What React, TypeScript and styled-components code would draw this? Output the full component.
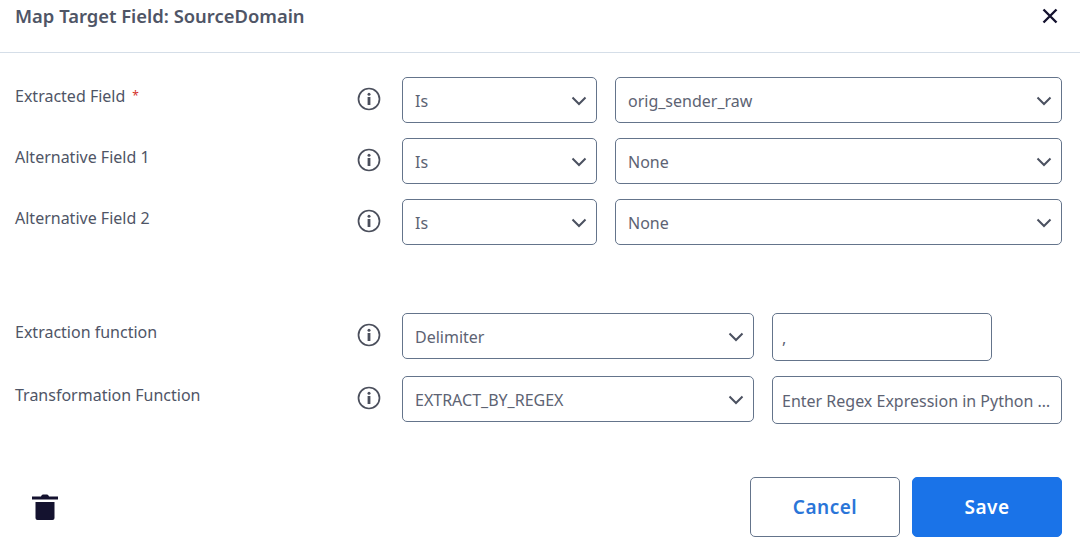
import React from 'react'
import styled, { createGlobalStyle } from 'styled-components'

const GlobalStyle = createGlobalStyle`
html, body {
  margin: 0;
  background: #fff;
  font-family: "Noto Sans", "Open Sans", sans-serif;
}
`

const Dialog = styled('div')`
  width: 1080px;
  height: 538px;
  overflow: hidden;
  display: flex;
  flex-direction: column;
`

const Header = styled('header')`
  height: 52px;
  flex: none;
  border-bottom: 1px solid #d5dee8;
  display: flex;
  align-items: flex-start;
  justify-content: space-between;
  padding: 0 18px 0 15px;
`

const Title = styled('h2')`
  margin: 4px 0 0;
  font-size: 18.4px;
  line-height: 24px;
  font-weight: 600;
  color: #4f5566;
`

const CloseButton = styled('button')`
  border: 0;
  background: none;
  padding: 0;
  margin-top: 7px;
  width: 24px;
  height: 18px;
  display: flex;
  align-items: center;
  justify-content: center;
`

const Form = styled('div')`
  flex: 1;
  padding: 24px 18px 0 15px;
  display: flex;
  flex-direction: column;
`

const Group = styled('div')<{ $mb: number }>`
  display: flex;
  flex-direction: column;
  gap: 15px;
  margin-bottom: ${p => p.$mb}px;
`

const Row = styled('div')`
  display: flex;
  align-items: flex-start;
`

const Label = styled('label')`
  width: 342px;
  flex: none;
  padding-top: 9px;
  font-size: 16px;
  line-height: 20px;
  color: #4f5566;
`

const Required = styled('span')`
  color: #d4342c;
  font-size: 12px;
  margin-left: 7px;
  vertical-align: 2px;
`

const InfoSlot = styled('div')`
  width: 45px;
  flex: none;
  padding-top: 10px;
  height: 24px;
`

const Controls = styled('div')`
  display: flex;
  gap: 18px;
`

const SelectBox = styled('div')<{ $w: number }>`
  width: ${p => p.$w}px;
  height: 46px;
  box-sizing: border-box;
  border: 1px solid #64748b;
  border-radius: 5px;
  padding: 2px 9px 0 12px;
  display: flex;
  align-items: center;
  justify-content: space-between;
  font-size: 16px;
  color: #5d6373;
`

const TextBox = styled('div')<{ $w: number }>`
  width: ${p => p.$w}px;
  height: 48px;
  box-sizing: border-box;
  border: 1px solid #64748b;
  border-radius: 5px;
  padding: 1px 9px 0;
  display: flex;
  align-items: center;
  font-size: 16px;
  color: #5d6373;
  white-space: nowrap;
  overflow: hidden;
`

const Footer = styled('div')`
  padding: 0 18px 0 32px;
  display: flex;
  align-items: center;
  justify-content: space-between;
  height: 60px;
  margin-bottom: 1px;
`

const Actions = styled('div')`
  display: flex;
  gap: 12px;
`

const Button = styled('button')<{ $primary?: boolean }>`
  width: 150px;
  height: 60px;
  box-sizing: border-box;
  border-radius: 5px;
  border: 1px solid ${p => (p.$primary ? '#1a73e8' : '#64748b')};
  background: ${p => (p.$primary ? '#1a73e8' : '#fff')};
  color: ${p => (p.$primary ? '#fff' : '#2a75d8')};
  font-family: inherit;
  font-size: 19px;
  font-weight: 600;
  letter-spacing: 0.5px;
`

const Chevron = () => (
  <svg width="16" height="10" viewBox="0 0 16 10" fill="none">
    <path d="M1.5 1.5 8 8l6.5-6.5" stroke="#4b5160" strokeWidth="2" />
  </svg>
)

const Info = () => (
  <svg width="24" height="24" viewBox="0 0 24 24" fill="none">
    <circle cx="12" cy="12" r="10.5" stroke="#4b4f5c" strokeWidth="1.7" />
    <circle cx="12" cy="7.2" r="1.5" fill="#4b4f5c" />
    <rect x="10.6" y="10" width="2.8" height="8" fill="#4b4f5c" />
  </svg>
)

const Select = ({ value, w }: { value: string; w: number }) => (
  <SelectBox $w={w}>
    {value}
    <Chevron />
  </SelectBox>
)

const Field = ({ label, required, children }: { label: string; required?: boolean; children: React.ReactNode }) => (
  <Row>
    <Label>
      {label}
      {required && <Required>*</Required>}
    </Label>
    <InfoSlot>
      <Info />
    </InfoSlot>
    <Controls>{children}</Controls>
  </Row>
)

const App = () => {
  return (
    <Dialog>
      <GlobalStyle />
      <Header>
        <Title>Map Target Field: SourceDomain</Title>
        <CloseButton>
          <svg width="16" height="16" viewBox="0 0 16 16" fill="none">
            <path d="M1.5 1.5l13 13M14.5 1.5l-13 13" stroke="#14122f" strokeWidth="2.4" />
          </svg>
        </CloseButton>
      </Header>
      <Form>
        <Group $mb={68}>
          <Field label="Extracted Field" required>
            <Select value="Is" w={195} />
            <Select value="orig_sender_raw" w={447} />
          </Field>
          <Field label="Alternative Field 1">
            <Select value="Is" w={195} />
            <Select value="None" w={447} />
          </Field>
          <Field label="Alternative Field 2">
            <Select value="Is" w={195} />
            <Select value="None" w={447} />
          </Field>
        </Group>
        <Group $mb={0}>
          <Field label="Extraction function">
            <Select value="Delimiter" w={352} />
            <TextBox $w={220}>,</TextBox>
          </Field>
          <Field label="Transformation Function">
            <Select value="EXTRACT_BY_REGEX" w={352} />
            <TextBox $w={290}>Enter Regex Expression in Python …</TextBox>
          </Field>
        </Group>
      </Form>
      <Footer>
        <svg width="26" height="26" viewBox="0 0 26 26" fill="#14122f">
          <path d="M9 2.500C9.500 1 10.500 .5 11.500 .5h3c1 0 2 .5 2.500 2H26v3H0v-3z" />
          <path d="M3.500 8h19v16a2 2 0 0 1-2 2h-15a2 2 0 0 1-2-2z" />
        </svg>
        <Actions>
          <Button>Cancel</Button>
          <Button $primary>Save</Button>
        </Actions>
      </Footer>
    </Dialog>
  )
}

export default App
